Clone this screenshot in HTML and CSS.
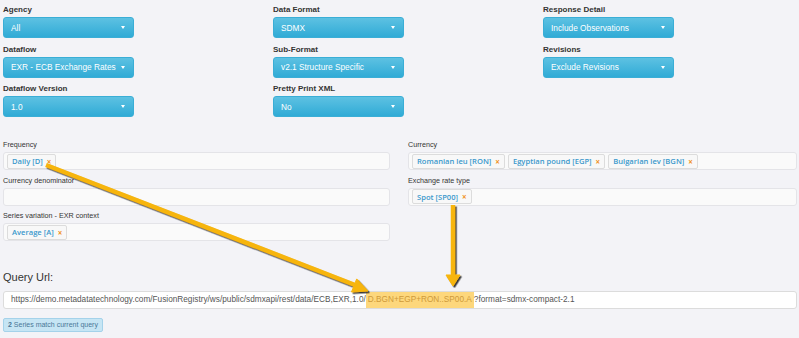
FILE: index.html
```html
<!DOCTYPE html>
<html lang="en">
  <head>
    <meta charset="UTF-8" />
    <title>Query Builder</title>
    <link rel="stylesheet" href="styles.css">
  </head>
  <body>
    <div class="page">
      <div class="params">
        <div class="col">
          <div class="field"><label>Agency</label><button class="pick">All<span class="caret"></span></button></div>
          <div class="field"><label>Dataflow</label><button class="pick">EXR - ECB Exchange Rates<span class="caret"></span></button></div>
          <div class="field"><label>Dataflow Version</label><button class="pick">1.0<span class="caret"></span></button></div>
        </div>
        <div class="col">
          <div class="field"><label>Data Format</label><button class="pick">SDMX<span class="caret"></span></button></div>
          <div class="field"><label>Sub-Format</label><button class="pick">v2.1 Structure Specific<span class="caret"></span></button></div>
          <div class="field"><label>Pretty Print XML</label><button class="pick">No<span class="caret"></span></button></div>
        </div>
        <div class="col">
          <div class="field"><label>Response Detail</label><button class="pick">Include Observations<span class="caret"></span></button></div>
          <div class="field"><label>Revisions</label><button class="pick">Exclude Revisions<span class="caret"></span></button></div>
        </div>
      </div>

      <div class="dims">
        <div class="col">
          <div class="dim">
            <div class="dim-label">Frequency</div>
            <div class="tagbox"><span class="tag">Daily [D]<i class="rm">&times;</i></span></div>
          </div>
          <div class="dim">
            <div class="dim-label">Currency denominator</div>
            <div class="tagbox"></div>
          </div>
          <div class="dim">
            <div class="dim-label">Series variation - EXR context</div>
            <div class="tagbox"><span class="tag">Average [A]<i class="rm">&times;</i></span></div>
          </div>
        </div>
        <div class="col">
          <div class="dim">
            <div class="dim-label">Currency</div>
            <div class="tagbox">
              <span class="tag">Romanian leu [RON]<i class="rm">&times;</i></span>
              <span class="tag">Egyptian pound [EGP]<i class="rm">&times;</i></span>
              <span class="tag">Bulgarian lev [BGN]<i class="rm">&times;</i></span>
            </div>
          </div>
          <div class="dim">
            <div class="dim-label">Exchange rate type</div>
            <div class="tagbox"><span class="tag">Spot [SP00]<i class="rm">&times;</i></span></div>
          </div>
        </div>
      </div>

      <div class="query">
        <h3>Query Url:</h3>
        <div class="url">https://demo.metadatatechnology.com/FusionRegistry/ws/public/sdmxapi/rest/data/ECB,EXR,1.0/<mark>D.BGN+EGP+RON..SP00.A</mark>?format=sdmx-compact-2.1</div>
        <span class="badge"><b>2</b> Series match current query</span>
      </div>

      <!-- callout arrows drawn over the page -->
      <svg class="arrows" width="799" height="338" viewBox="0 0 799 338">
        <defs>
          <filter id="shade" x="-10%" y="-10%" width="130%" height="130%">
            <feDropShadow dx="1.5" dy="1.5" stdDeviation="0.7" flood-color="#222" flood-opacity="0.9" />
          </filter>
        </defs>
        <g fill="#f7b50c" stroke="#f7b50c" filter="url(#shade)">
          <line x1="46" y1="165" x2="355" y2="285" stroke-width="4.5" />
          <polygon points="368,291 351.5,292 356.7,278.9" stroke-width="1" />
          <line x1="453" y1="205" x2="453" y2="277" stroke-width="4.5" />
          <polygon points="446,275 460,275 453,286" stroke-width="1" />
        </g>
      </svg>
    </div>
  </body>
</html>
```

FILE: styles.css
```css
/* General styles */
* {
  box-sizing: border-box;
}

body {
  margin: 0;
  background-color: #f3f3f7;
  font-family: "Liberation Sans", Arial, sans-serif;
  color: #333;
}

.page {
  position: relative;
  width: 799px;
  height: 338px;
  padding: 4px 2px 0 3px;
  overflow: hidden;
}

/* top parameter pickers */
.params {
  display: grid;
  grid-template-columns: 270px 270px 1fr;
}

.col {
  display: flex;
  flex-direction: column;
  gap: 5.5px;
}

.field label {
  display: block;
  font-weight: bold;
  font-size: 8px;
  line-height: 11px;
  margin-bottom: 2px;
}

.pick {
  display: flex;
  align-items: center;
  width: 131px;
  height: 21px;
  padding: 0 8px 0 7px;
  border: 1px solid #3aaed6;
  border-radius: 3px;
  background: linear-gradient(#5dc1e2, #30abd6);
  color: #fff;
  font-family: "Liberation Sans", Arial, sans-serif;
  font-size: 8.3px;
  text-align: left;
}

.caret {
  margin-left: auto;
  width: 0;
  height: 0;
  border-left: 2.5px solid transparent;
  border-right: 2.5px solid transparent;
  border-top: 3px solid #fff;
}

/* dimension filters */
.dims {
  display: grid;
  grid-template-columns: 387px 1fr;
  column-gap: 18px;
  margin-top: 23px;
}

.dim-label {
  font-size: 7.2px;
  line-height: 10px;
  margin-bottom: 2px;
}

.tagbox {
  display: flex;
  align-items: center;
  gap: 3px;
  height: 18px;
  padding: 0 3px;
  border: 1px solid #e4e4e8;
  border-radius: 3px;
  background-color: #fafafa;
}

.tag {
  display: inline-flex;
  align-items: center;
  gap: 4px;
  height: 15px;
  padding: 0 4px;
  border: 1px solid #dcdcdc;
  border-radius: 2px;
  background-color: #f8f8f8;
  color: #3b98cc;
  font-family: "Open Sans", sans-serif;
  font-weight: 600;
  font-size: 7.6px;
}

.rm {
  font-style: normal;
  font-weight: bold;
  font-size: 8px;
  color: #f0921e;
}

/* query url */
.query {
  margin-top: 30px;
}

.query h3 {
  margin: 0 0 7px;
  font-size: 11px;
  line-height: 13px;
  font-weight: normal;
}

.url {
  height: 18px;
  padding: 0 7px;
  border: 1px solid #dcdcdc;
  border-radius: 3px;
  background-color: #fff;
  color: #555;
  font-size: 8.25px;
  line-height: 16px;
  white-space: nowrap;
  overflow: hidden;
}

.url mark {
  display: inline-block;
  padding: 0 2px;
  background-color: #fdd77c;
  color: #cf9a3a;
}

.badge {
  display: inline-block;
  margin-top: 9px;
  padding: 0 4px;
  height: 14px;
  line-height: 12px;
  border: 1px solid #a4d2ea;
  border-radius: 2px;
  background-color: #c6e5f4;
  color: #4a7898;
  font-size: 7px;
}

.arrows {
  position: absolute;
  top: 0;
  left: 0;
  pointer-events: none;
}
```
